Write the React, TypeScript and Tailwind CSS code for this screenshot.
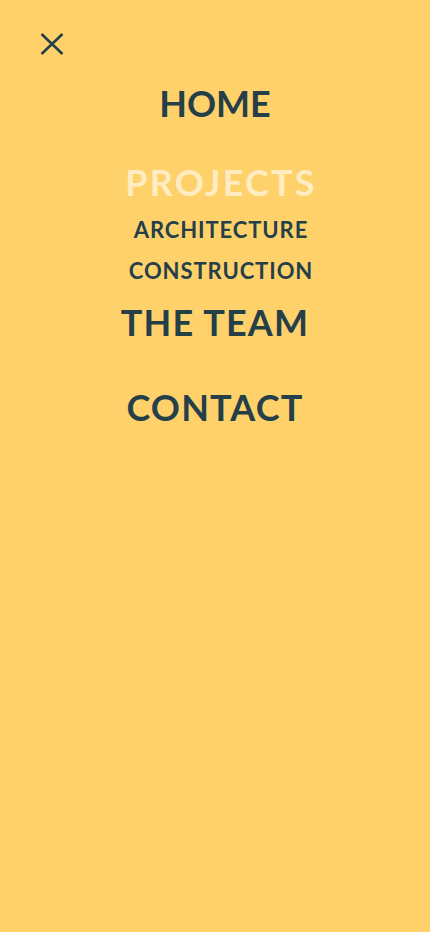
export default function App() {
  const big = 'block text-[36px] leading-[44px] font-bold'
  const small = 'block text-[22px] leading-[28px] font-bold tracking-[0.9px]'

  return (
    <div
      className="min-h-[932px] w-full bg-[#fed16b] text-[#253f49]"
      style={{ fontFamily: 'Lato, "Open Sans", sans-serif' }}
    >
      <div className="pt-[33px] pl-[40px]">
        <button aria-label="Close menu" className="block">
          <svg width="24" height="22" viewBox="0 0 24 22" fill="none">
            <path d="M1.5 1 L22.5 21 M22.5 1 L1.5 21" stroke="#253f49" strokeWidth="2.6" />
          </svg>
        </button>
      </div>

      <nav className="mt-[26px] flex flex-col items-center text-center">
        <a href="#" className={big}>HOME</a>

        <div className="mt-[35px] flex flex-col items-center pl-3">
          <a href="#" className={`${big} tracking-[2.2px] text-[#ffecc1]`}>PROJECTS</a>
          <a href="#" className={`${small} mt-[12px]`}>ARCHITECTURE</a>
          <a href="#" className={`${small} mt-[13px]`}>CONSTRUCTION</a>
        </div>

        <a href="#" className={`${big} tracking-[1.2px] mt-[15px]`}>THE TEAM</a>
        <a href="#" className={`${big} tracking-[1.2px] mt-[41px]`}>CONTACT</a>
      </nav>
    </div>
  )
}
